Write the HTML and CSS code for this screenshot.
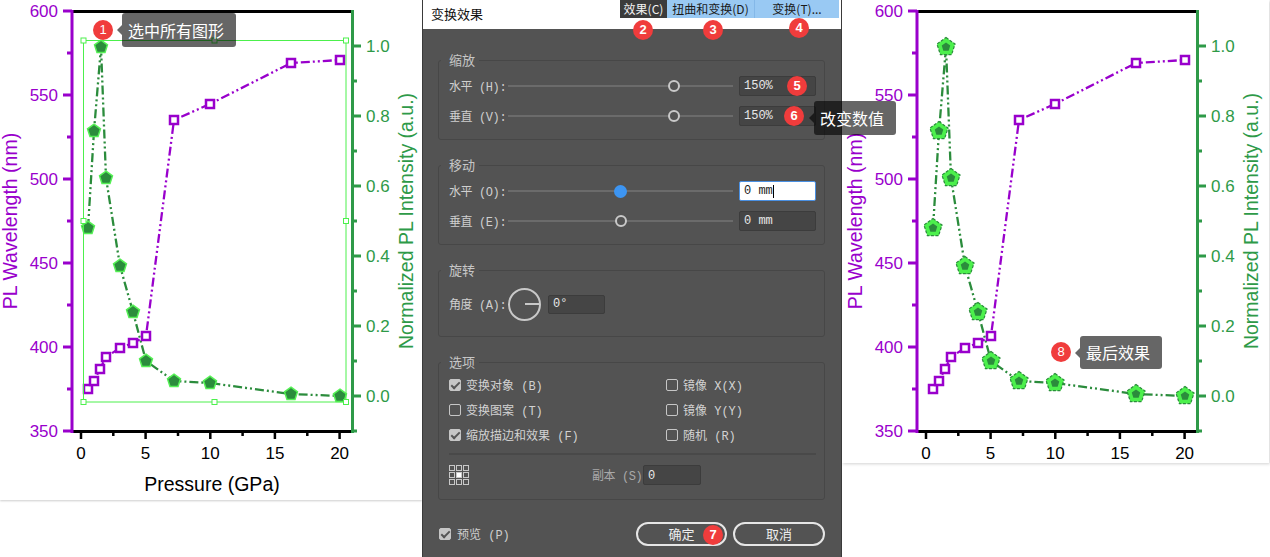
FILE: index.html
```html
<!DOCTYPE html>
<html lang="zh-CN">
<head>
<meta charset="utf-8">
<title>变换效果</title>
<link rel="stylesheet" href="styles.css">
</head>
<body>
<div class="page">
  <section class="chart-panel chart-left">
    <svg class="plot" width="422" height="500" viewBox="0 0 422 500">
      <defs>
        <path id="pS" d="M0-6.8L6.47-2.1 4 5.5-4 5.5-6.47-2.1Z"/>
        <rect id="sqA" x="-4" y="-4" width="8" height="8"/>
      </defs>
      <g class="axes">
        <line class="ax-k" x1="72" y1="11.5" x2="353" y2="11.5"/>
        <line class="ax-k" x1="72" y1="431.5" x2="353" y2="431.5"/>
        <line class="ax-p" x1="72" y1="10" x2="72" y2="433"/>
        <line class="ax-g" x1="352.5" y1="10" x2="352.5" y2="433"/>
        <path class="tk-p" d="M63 11H72M63 95H72M63 179H72M63 263H72M63 347H72M63 431H72M67 53H72M67 137H72M67 221H72M67 305H72M67 389H72"/>
        <path class="tk-g" d="M352 46H361M352 116H361M352 186H361M352 256H361M352 326H361M352 396H361M352 81H357M352 151H357M352 221H357M352 291H357M352 361H357M352 431H357"/>
        <path class="tk-k" d="M81 431V439M145.6 431V439M210.3 431V439M274.9 431V439M339.6 431V439M113.3 431V436M178 431V436M242.6 431V436M307.3 431V436"/>
      </g>
      <g class="lab-p">
        <text x="58" y="17">600</text><text x="58" y="101">550</text><text x="58" y="185">500</text>
        <text x="58" y="269">450</text><text x="58" y="353">400</text><text x="58" y="437">350</text>
      </g>
      <g class="lab-g">
        <text x="366" y="52">1.0</text><text x="366" y="122">0.8</text><text x="366" y="192">0.6</text>
        <text x="366" y="262">0.4</text><text x="366" y="332">0.2</text><text x="366" y="402">0.0</text>
      </g>
      <g class="lab-k">
        <text x="81" y="459">0</text><text x="145.6" y="459">5</text><text x="210.3" y="459">10</text>
        <text x="274.9" y="459">15</text><text x="339.6" y="459">20</text>
      </g>
      <text class="title-p" transform="translate(17 221) rotate(-90)">PL Wavelength (nm)</text>
      <text class="title-g" transform="translate(413 221) rotate(-90)">Normalized PL Intensity (a.u.)</text>
      <text class="title-k" x="212" y="491">Pressure (GPa)</text>
      <polyline class="ln-g" points="88,228 94,131 101,47 106,178 120,266 133,312 146,361 174,381 210,383 291,394 340,396"/>
      <polyline class="ln-p" points="88,389 94,381 100,369 106,357 120,348 133,343 146,336 174,120 210,104 291,63 340,60"/>
      <g class="mk-g">
        <use href="#pS" x="88" y="228"/><use href="#pS" x="94" y="131"/><use href="#pS" x="101" y="47"/>
        <use href="#pS" x="106" y="178"/><use href="#pS" x="120" y="266"/><use href="#pS" x="133" y="312"/>
        <use href="#pS" x="146" y="361"/><use href="#pS" x="174" y="381"/><use href="#pS" x="210" y="383"/>
        <use href="#pS" x="291" y="394"/><use href="#pS" x="340" y="396"/>
      </g>
      <g class="mk-p">
        <use href="#sqA" x="88" y="389"/><use href="#sqA" x="94" y="381"/><use href="#sqA" x="100" y="369"/>
        <use href="#sqA" x="106" y="357"/><use href="#sqA" x="120" y="348"/><use href="#sqA" x="133" y="343"/>
        <use href="#sqA" x="146" y="336"/><use href="#sqA" x="174" y="120"/><use href="#sqA" x="210" y="104"/>
        <use href="#sqA" x="291" y="63"/><use href="#sqA" x="340" y="60"/>
      </g>
      <g class="sel">
        <rect x="83.5" y="40.5" width="262.5" height="361.5"/>
        <rect class="hd" x="81" y="38" width="5" height="5"/><rect class="hd" x="212" y="38" width="5" height="5"/>
        <rect class="hd" x="343.5" y="38" width="5" height="5"/><rect class="hd" x="81" y="218.5" width="5" height="5"/>
        <rect class="hd" x="343.5" y="218.5" width="5" height="5"/><rect class="hd" x="81" y="399.5" width="5" height="5"/>
        <rect class="hd" x="212" y="399.5" width="5" height="5"/><rect class="hd" x="343.5" y="399.5" width="5" height="5"/>
      </g>
    </svg>
  </section>

  <section class="dialog">
    <header class="titlebar">
      <span class="title">变换效果</span>
      <nav class="menubar">
        <span class="mi mi1">效果(C)</span><span class="mi mi2">扭曲和变换(D)</span><span class="mi mi3">变换(T)...</span>
      </nav>
    </header>
    <div class="dlg-body">
      <fieldset class="grp grp-slide">
        <legend>缩放</legend>
        <div class="row">
          <span class="lbl">水平 (H):</span>
          <div class="slider"><span class="thumb" style="left:73.8%"></span></div>
          <span class="field">150%</span>
        </div>
        <div class="row">
          <span class="lbl">垂直 (V):</span>
          <div class="slider"><span class="thumb" style="left:73.8%"></span></div>
          <span class="field">150%</span>
        </div>
      </fieldset>

      <fieldset class="grp grp-slide">
        <legend>移动</legend>
        <div class="row">
          <span class="lbl">水平 (O):</span>
          <div class="slider"><span class="thumb thumb-on" style="left:50.2%"></span></div>
          <span class="field field-focus">0 mm<span class="caret"></span></span>
        </div>
        <div class="row">
          <span class="lbl">垂直 (E):</span>
          <div class="slider"><span class="thumb" style="left:50.2%"></span></div>
          <span class="field">0 mm</span>
        </div>
      </fieldset>

      <fieldset class="grp grp-rot">
        <legend>旋转</legend>
        <div class="row row-rot">
          <span class="lbl">角度 (A):</span>
          <span class="dial"></span>
          <span class="field field-sm">0°</span>
        </div>
      </fieldset>

      <fieldset class="grp grp-opt">
        <legend>选项</legend>
        <div class="opts">
          <label class="opt"><span class="cb cb-on"></span>变换对象 (B)</label>
          <label class="opt"><span class="cb"></span>镜像 X(X)</label>
          <label class="opt"><span class="cb"></span>变换图案 (T)</label>
          <label class="opt"><span class="cb"></span>镜像 Y(Y)</label>
          <label class="opt"><span class="cb cb-on"></span>缩放描边和效果 (F)</label>
          <label class="opt"><span class="cb"></span>随机 (R)</label>
        </div>
        <div class="sep"></div>
        <div class="copy-row">
          <svg class="ref-icon" width="20" height="20" viewBox="0 0 20 20">
            <g fill="none" stroke="#c8c8c8" stroke-width="1">
              <rect x="0.5" y="0.5" width="5" height="5"/><rect x="7.5" y="0.5" width="5" height="5"/><rect x="14.5" y="0.5" width="5" height="5"/>
              <rect x="0.5" y="7.5" width="5" height="5"/><rect x="14.5" y="7.5" width="5" height="5"/>
              <rect x="0.5" y="14.5" width="5" height="5"/><rect x="7.5" y="14.5" width="5" height="5"/><rect x="14.5" y="14.5" width="5" height="5"/>
            </g>
            <rect x="7.5" y="7.5" width="5" height="5" fill="#ffffff" stroke="#c8c8c8" stroke-width="1"/>
          </svg>
          <span class="copy-lbl">副本 (S)</span>
          <span class="field field-copy">0</span>
        </div>
      </fieldset>

      <div class="footer">
        <label class="opt preview"><span class="cb cb-on"></span>预览 (P)</label>
        <div class="buttons">
          <button class="btn btn-ok">确定</button>
          <button class="btn">取消</button>
        </div>
      </div>
    </div>
  </section>

  <section class="chart-panel chart-right">
    <svg class="plot" width="427" height="463" viewBox="0 0 427 463">
      <defs>
        <path id="pB" d="M0-9.5L9.03-2.94 5.58 7.69-5.58 7.69-9.03-2.94Z"/>
        <path id="pI" d="M0-4.5L4.28-1.39 2.65 3.64-2.65 3.64-4.28-1.39Z"/>
        <rect id="sqB" x="-4" y="-4" width="8" height="8"/>
      </defs>
      <g transform="translate(3 0)">
        <g class="axes">
          <line class="ax-k" x1="72" y1="11.5" x2="353" y2="11.5"/>
          <line class="ax-k" x1="72" y1="431.5" x2="353" y2="431.5"/>
          <line class="ax-p" x1="72" y1="10" x2="72" y2="433"/>
          <line class="ax-g" x1="352.5" y1="10" x2="352.5" y2="433"/>
          <path class="tk-p" d="M63 11H72M63 95H72M63 179H72M63 263H72M63 347H72M63 431H72M67 53H72M67 137H72M67 221H72M67 305H72M67 389H72"/>
          <path class="tk-g" d="M352 46H361M352 116H361M352 186H361M352 256H361M352 326H361M352 396H361M352 81H357M352 151H357M352 221H357M352 291H357M352 361H357M352 431H357"/>
          <path class="tk-k" d="M81 431V439M145.6 431V439M210.3 431V439M274.9 431V439M339.6 431V439M113.3 431V436M178 431V436M242.6 431V436M307.3 431V436"/>
        </g>
        <g class="lab-p">
          <text x="58" y="17">600</text><text x="58" y="101">550</text><text x="58" y="185">500</text>
          <text x="58" y="269">450</text><text x="58" y="353">400</text><text x="58" y="437">350</text>
        </g>
        <g class="lab-g">
          <text x="366" y="52">1.0</text><text x="366" y="122">0.8</text><text x="366" y="192">0.6</text>
          <text x="366" y="262">0.4</text><text x="366" y="332">0.2</text><text x="366" y="402">0.0</text>
        </g>
        <g class="lab-k">
          <text x="81" y="459">0</text><text x="145.6" y="459">5</text><text x="210.3" y="459">10</text>
          <text x="274.9" y="459">15</text><text x="339.6" y="459">20</text>
        </g>
        <text class="title-p" transform="translate(17 221) rotate(-90)">PL Wavelength (nm)</text>
        <text class="title-g" transform="translate(413 221) rotate(-90)">Normalized PL Intensity (a.u.)</text>
        <polyline class="ln-g" points="88,228 94,131 101,47 106,178 120,266 133,312 146,361 174,381 210,383 291,394 340,396"/>
        <polyline class="ln-p" points="88,389 94,381 100,369 106,357 120,348 133,343 146,336 174,120 210,104 291,63 340,60"/>
        <g class="mk-gb">
          <use href="#pB" x="88" y="228"/><use href="#pB" x="94" y="131"/><use href="#pB" x="101" y="47"/>
          <use href="#pB" x="106" y="178"/><use href="#pB" x="120" y="266"/><use href="#pB" x="133" y="312"/>
          <use href="#pB" x="146" y="361"/><use href="#pB" x="174" y="381"/><use href="#pB" x="210" y="383"/>
          <use href="#pB" x="291" y="394"/><use href="#pB" x="340" y="396"/>
        </g>
        <g class="mk-gi">
          <use href="#pI" x="88" y="228"/><use href="#pI" x="94" y="131"/><use href="#pI" x="101" y="47"/>
          <use href="#pI" x="106" y="178"/><use href="#pI" x="120" y="266"/><use href="#pI" x="133" y="312"/>
          <use href="#pI" x="146" y="361"/><use href="#pI" x="174" y="381"/><use href="#pI" x="210" y="383"/>
          <use href="#pI" x="291" y="394"/><use href="#pI" x="340" y="396"/>
        </g>
        <g class="mk-p">
          <use href="#sqB" x="88" y="389"/><use href="#sqB" x="94" y="381"/><use href="#sqB" x="100" y="369"/>
          <use href="#sqB" x="106" y="357"/><use href="#sqB" x="120" y="348"/><use href="#sqB" x="133" y="343"/>
          <use href="#sqB" x="146" y="336"/><use href="#sqB" x="174" y="120"/><use href="#sqB" x="210" y="104"/>
          <use href="#sqB" x="291" y="63"/><use href="#sqB" x="340" y="60"/>
        </g>
      </g>
    </svg>
  </section>

  <div class="overlay">
    <span class="badge b1">1</span>
    <div class="tip tip1">选中所有图形</div>
    <span class="badge b2">2</span>
    <span class="badge b3">3</span>
    <span class="badge b4">4</span>
    <span class="badge b5">5</span>
    <span class="badge b6">6</span>
    <div class="tip tip2">改变数值</div>
    <span class="badge b7">7</span>
    <span class="badge b8">8</span>
    <div class="tip tip8">最后效果</div>
  </div>
</div>
</body>
</html>
```

FILE: styles.css
```css
* { box-sizing: border-box; }

body {
  margin: 0;
  background: #ffffff;
  font-family: "Noto Sans CJK SC", sans-serif;
}

.page {
  position: relative;
  display: flex;
  align-items: flex-start;
  width: 1270px;
  height: 557px;
  overflow: hidden;
}

/* ---------- chart panels ---------- */
.chart-panel { background: #ffffff; flex: none; }
.chart-left { width: 422px; height: 500px; box-shadow: 0 1px 2px rgba(0,0,0,0.2); }
.chart-right { width: 427px; height: 463px; box-shadow: 1px 1px 3px rgba(0,0,0,0.18); }
.plot { display: block; font-family: "Liberation Sans", Arial, sans-serif; }

.ax-k { stroke: #000; stroke-width: 3; }
.ax-p { stroke: #9900cc; stroke-width: 3; }
.ax-g { stroke: #2e9a48; stroke-width: 3; }
.tk-p { stroke: #9900cc; stroke-width: 3; fill: none; }
.tk-g { stroke: #2e9a48; stroke-width: 3; fill: none; }
.tk-k { stroke: #000; stroke-width: 2.5; fill: none; }

.lab-p text { fill: #9900cc; font-size: 17px; text-anchor: end; }
.lab-g text { fill: #2e9a48; font-size: 17px; }
.lab-k text { fill: #000; font-size: 17px; text-anchor: middle; }
.title-p { fill: #9900cc; font-size: 19.5px; text-anchor: middle; }
.title-g { fill: #2e9a48; font-size: 19.5px; text-anchor: middle; }
.title-k { fill: #000; font-size: 19.5px; text-anchor: middle; }

.ln-p { fill: none; stroke: #9900cc; stroke-width: 2.3; stroke-dasharray: 9 3 2 3 2 3; }
.ln-g { fill: none; stroke: #2b8c3c; stroke-width: 2.3; stroke-dasharray: 9 3 2 3 2 3; }
.mk-p { fill: #ffffff; stroke: #9900cc; stroke-width: 2.5; }
.mk-g { fill: #2b8c3c; stroke: #55f055; stroke-width: 1.5; }
.mk-gb { fill: #4cf04c; stroke: #2b8c3c; stroke-width: 1.2; stroke-dasharray: 3 1.5; }
.mk-gi { fill: #2b8c3c; }

.sel rect { fill: none; stroke: #4cf04c; stroke-width: 1; }
.sel .hd { fill: #ffffff; }

/* ---------- dialog ---------- */
.dialog {
  position: relative;
  z-index: 1;
  flex: none;
  width: 420px;
  height: 557px;
  background: #535353;
  border-left: 1px solid #3a3a3a;
  border-right: 1px solid #3a3a3a;
  display: flex;
  flex-direction: column;
}

.titlebar {
  height: 29px;
  background: #ffffff;
  display: flex;
  align-items: flex-start;
}
.title {
  padding: 6px 0 0 8px;
  font-size: 13px;
  line-height: 16px;
  color: #111;
}
.menubar {
  margin-left: auto;
  margin-right: 2px;
  height: 18px;
  display: flex;
  background: #99c9f3;
}
.mi {
  font-size: 12px;
  line-height: 18px;
  text-align: center;
  color: #1a1a1a;
  white-space: nowrap;
}
.mi1 { width: 47px; background: #3b3b3b; color: #f2f2f2; }
.mi2 { width: 88px; border-right: 1px solid #84b8e8; }
.mi3 { width: 84px; }

.dlg-body {
  padding: 23px 16px 0 15px;
  display: flex;
  flex-direction: column;
  gap: 17px;
}

.grp {
  margin: 0;
  min-width: 0;
  border: 1px solid #474747;
  border-radius: 3px;
  padding: 8px 8px 13px 10px;
}
.grp legend {
  font-size: 13px;
  line-height: 16px;
  color: #c6c6c6;
  padding: 0 4px 0 8px;
  margin-left: -8px;
}
.grp-rot { padding: 9px 8px 15px 10px; }
.grp-opt { padding: 6px 8px 14px 10px; }

.row {
  display: flex;
  align-items: center;
  height: 20px;
}
.row + .row { margin-top: 10px; }
.row-rot { height: 34px; }

.lbl, .opt, .copy-lbl {
  font-family: "Liberation Mono", "Noto Sans CJK SC", monospace;
  font-size: 12px;
  color: #cfcfcf;
  white-space: nowrap;
}
.lbl { width: 59px; flex: none; letter-spacing: -0.4px; }

.slider {
  flex: 1;
  position: relative;
  height: 2px;
  background: #6b6b6b;
  margin-right: 6px;
}
.thumb {
  position: absolute;
  top: 50%;
  width: 12px;
  height: 12px;
  margin: -6px 0 0 -6px;
  border: 2px solid #c9c9c9;
  border-radius: 50%;
  background: #535353;
}
.thumb-on {
  width: 13px;
  height: 13px;
  margin: -6.5px 0 0 -6.5px;
  border-color: #3d95f2;
  background: #3d95f2;
}

.field {
  flex: none;
  width: 77px;
  height: 20px;
  padding-left: 4px;
  background: #454545;
  border: 1px solid #3c3c3c;
  border-radius: 2px;
  color: #e8e8e8;
  font-family: "Liberation Mono", monospace;
  font-size: 12px;
  line-height: 18px;
  display: flex;
  align-items: center;
}
.field-focus { background: #ffffff; border-color: #4a90e2; color: #222; }
.caret { width: 1px; height: 13px; background: #000; }
.field-sm { width: 57px; height: 19px; margin-left: 7px; }
.field-copy { width: 58px; height: 20px; align-items: flex-start; padding-top: 1px; }

.dial {
  position: relative;
  flex: none;
  width: 33px;
  height: 33px;
  border: 2px solid #c8c8c8;
  border-radius: 50%;
}
.dial::after {
  content: "";
  position: absolute;
  left: 50%;
  top: 50%;
  width: 50%;
  height: 2px;
  margin-top: -1px;
  background: #c8c8c8;
}

.opts {
  display: grid;
  grid-template-columns: 217px 1fr;
  row-gap: 7px;
}
.opt {
  display: flex;
  align-items: center;
  height: 18px;
  color: #d2d2d2;
}
.cb {
  position: relative;
  flex: none;
  width: 12px;
  height: 12px;
  margin-right: 5px;
  border: 1px solid #c6c6c6;
  border-radius: 2px;
}
.cb-on { background: #c6c6c6; }
.cb-on::after {
  content: "";
  position: absolute;
  left: 3px;
  top: 0px;
  width: 3px;
  height: 7px;
  border: solid #555;
  border-width: 0 2px 2px 0;
  transform: rotate(45deg);
}

.sep { height: 2px; background: #494949; margin: 9px 0 10px; }

.copy-row { display: flex; align-items: center; height: 20px; }
.ref-icon { display: block; flex: none; }
.copy-lbl { width: 51px; margin-left: 123px; color: #a9a9a9; letter-spacing: -0.4px; }

.footer {
  margin-top: 5px;
  height: 24px;
  display: flex;
  align-items: center;
}
.preview { margin-left: 1px; color: #cfcfcf; }
.preview .cb { margin-right: 6px; }
.buttons { margin-left: auto; display: flex; gap: 6px; }
.btn {
  width: 92px;
  height: 24px;
  padding: 0;
  border: 2px solid #e6e6e6;
  border-radius: 12px;
  background: transparent;
  color: #eeeeee;
  font-family: "Noto Sans CJK SC", sans-serif;
  font-size: 13px;
  line-height: 20px;
}
.btn-ok { width: 91px; }

/* ---------- overlay: badges & tooltips ---------- */
.overlay { position: absolute; inset: 0; z-index: 2; pointer-events: none; }
.badge {
  position: absolute;
  width: 20px;
  height: 20px;
  border-radius: 50%;
  background: #f03c3c;
  color: #fff;
  font-family: "Liberation Sans", Arial, sans-serif;
  font-weight: bold;
  font-size: 13px;
  line-height: 20px;
  text-align: center;
}
.b1 { left: 93px; top: 20px; font-weight: normal; }
.b2 { left: 633px; top: 20px; }
.b3 { left: 703px; top: 20px; }
.b4 { left: 789px; top: 18px; }
.b5 { left: 787px; top: 76px; }
.b6 { left: 784px; top: 106px; }
.b7 { left: 703px; top: 525px; }
.b8 { left: 1051px; top: 342px; font-weight: normal; }

.tip {
  position: absolute;
  height: 34px;
  padding-left: 6px;
  background: rgba(0,0,0,0.6);
  border-radius: 3px;
  color: #fff;
  font-size: 16px;
  line-height: 34px;
  white-space: nowrap;
}
.tip::before {
  content: "";
  position: absolute;
  left: -5px;
  top: 50%;
  margin-top: -5px;
  border-style: solid;
  border-width: 5px 5px 5px 0;
  border-color: transparent rgba(0,0,0,0.6) transparent transparent;
}
.tip1 { left: 122px; top: 13px; width: 114px; }
.tip2 { left: 814px; top: 101px; width: 82px; }
.tip8 { left: 1080px; top: 336px; width: 82px; height: 33px; line-height: 33px; }
```
